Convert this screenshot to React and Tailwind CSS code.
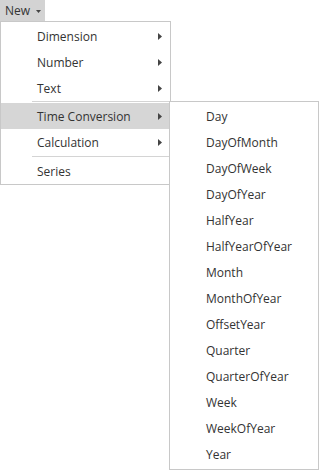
import React from 'react';

const mainItems = [
  { label: 'Dimension', sub: true },
  { label: 'Number', sub: true },
  { label: 'Text', sub: true, sepAfter: 'first' },
  { label: 'Time Conversion', sub: true, active: true },
  { label: 'Calculation', sub: true, sepAfter: 'second' },
  { label: 'Series' },
];

const timeItems = [
  'Day',
  'DayOfMonth',
  'DayOfWeek',
  'DayOfYear',
  'HalfYear',
  'HalfYearOfYear',
  'Month',
  'MonthOfYear',
  'OffsetYear',
  'Quarter',
  'QuarterOfYear',
  'Week',
  'WeekOfYear',
  'Year',
];

function RightCaret() {
  return (
    <svg width="4" height="7" viewBox="0 0 4 7" className="shrink-0">
      <path d="M0 0 L4 3.5 L0 7 Z" fill="#444" />
    </svg>
  );
}

export default function App() {
  return (
    <div className="relative h-[470px] w-[319px] bg-white font-['Open_Sans',sans-serif] text-[12px] text-[#333]">
      <button className="flex h-[21px] w-[45px] items-center gap-[6px] bg-[#d3d3d3] pl-[5px] pt-px text-[12px] text-[#333]">
        <span>New</span>
        <svg width="5" height="3" viewBox="0 0 5 3">
          <path d="M0 0 L5 0 L2.5 3 Z" fill="#444" />
        </svg>
      </button>

      <div className="absolute left-0 top-[21px] w-[171px] border border-[#c8c8c8] bg-white pt-px">
        {mainItems.map((item) => (
          <React.Fragment key={item.label}>
            <div
              className={`flex h-[26px] items-center pl-[36px] pr-[8px] pt-px ${item.active ? 'bg-[#d6d6d6]' : ''}`}
            >
              <span className="flex-1">{item.label}</span>
              {item.sub && <RightCaret />}
            </div>
            {item.sepAfter === 'first' && <div className="ml-[31px] mb-px h-px bg-[#d4d4d4]" />}
            {item.sepAfter === 'second' && <div className="ml-[31px] my-px h-px bg-[#d4d4d4]" />}
          </React.Fragment>
        ))}
      </div>

      <div className="absolute left-[169px] top-[101px] w-[150px] border border-[#c8c8c8] bg-white pt-px pb-[2px]">
        {timeItems.map((t) => (
          <div key={t} className="flex h-[26px] items-center pl-[36px] pt-px">
            {t}
          </div>
        ))}
      </div>
    </div>
  );
}
